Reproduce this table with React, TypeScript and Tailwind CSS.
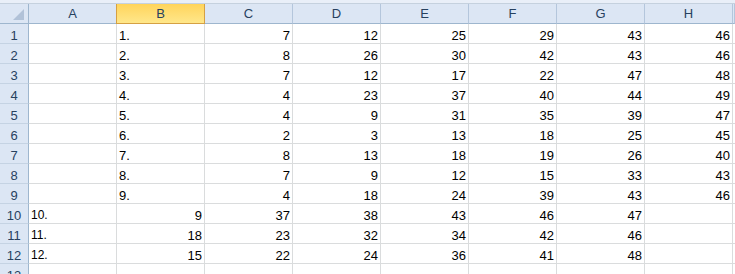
const COLS = ['A', 'B', 'C', 'D', 'E', 'F', 'G', 'H', ''];

// each row: [label column, label, numbers starting after label column]
const ROWS: { labelCol: number; label: string; nums: number[] }[] = [
  { labelCol: 1, label: '1.', nums: [7, 12, 25, 29, 43, 46] },
  { labelCol: 1, label: '2.', nums: [8, 26, 30, 42, 43, 46] },
  { labelCol: 1, label: '3.', nums: [7, 12, 17, 22, 47, 48] },
  { labelCol: 1, label: '4.', nums: [4, 23, 37, 40, 44, 49] },
  { labelCol: 1, label: '5.', nums: [4, 9, 31, 35, 39, 47] },
  { labelCol: 1, label: '6.', nums: [2, 3, 13, 18, 25, 45] },
  { labelCol: 1, label: '7.', nums: [8, 13, 18, 19, 26, 40] },
  { labelCol: 1, label: '8.', nums: [7, 9, 12, 15, 33, 43] },
  { labelCol: 1, label: '9.', nums: [4, 18, 24, 39, 43, 46] },
  { labelCol: 0, label: '10.', nums: [9, 37, 38, 43, 46, 47] },
  { labelCol: 0, label: '11.', nums: [18, 23, 32, 34, 42, 46] },
  { labelCol: 0, label: '12.', nums: [15, 22, 24, 36, 41, 48] },
];

const grid = 'grid grid-cols-[29px_repeat(8,88px)_1fr]';

function RowHeader({ n }: { n: number | string }) {
  return (
    <div className="h-[20px] bg-[#dce6f4] border-r border-b border-r-[#9eb6ce] border-b-[#c5d3e3] flex items-end justify-center pb-[1px] leading-[13px] text-[13px] text-[#27415f]">
      {n}
    </div>
  );
}

function Cell({ value, align, small }: { value?: string | number; align: 'left' | 'right'; small?: boolean }) {
  return (
    <div
      className={
        'h-[20px] border-r border-b border-[#dadcdd] flex items-end pb-[1px] px-[2px] leading-[13px] text-black whitespace-nowrap overflow-hidden ' +
        (align === 'right' ? 'justify-end ' : 'justify-start ') +
        (small ? 'text-[12px]' : 'text-[13px]')
      }
    >
      {value}
    </div>
  );
}

export default function App() {
  return (
    <div className="w-[735px] h-[274px] overflow-hidden bg-white font-['Liberation_Sans',Arial,sans-serif]">
      {/* strip above the column headers */}
      <div className="h-[4px] bg-[#e9eff8] border-b border-[#c5d1de]" />

      {/* column headers */}
      <div className={grid}>
        <div className="h-[20px] bg-[#dce6f4] border-r border-b border-[#9eb6ce] relative">
          <svg className="absolute left-[13px] top-[5px]" width="11" height="11" viewBox="0 0 11 11">
            <polygon points="11,0 11,11 0,11" fill="#b1c2d8" />
          </svg>
        </div>
        {COLS.map((c, i) =>
          c === 'B' ? (
            <div
              key={i}
              className="h-[20px] bg-gradient-to-b from-[#ffd45a] to-[#ffe78a] border-l border-r border-b border-[#d5a043] -ml-[1px] flex items-center justify-center text-[13px] text-[#27415f]"
            >
              {c}
            </div>
          ) : (
            <div
              key={i}
              className="h-[20px] bg-[#dce6f4] border-r border-b border-r-[#b4c6dc] border-b-[#9eb6ce] flex items-center justify-center text-[13px] text-[#27415f]"
            >
              {c}
            </div>
          )
        )}
      </div>

      {/* data rows */}
      {ROWS.map((r, ri) => (
        <div key={ri} className={grid}>
          <RowHeader n={ri + 1} />
          {COLS.map((_, ci) => {
            if (ci === r.labelCol) {
              return <Cell key={ci} value={r.label} align="left" small={r.labelCol === 0} />;
            }
            const k = ci - r.labelCol - 1;
            const v = k >= 0 && k < r.nums.length ? r.nums[k] : undefined;
            return <Cell key={ci} value={v} align="right" />;
          })}
        </div>
      ))}

      {/* next row, cut off at the bottom */}
      <div className={grid}>
        <RowHeader n={13} />
        {COLS.map((_, ci) => (
          <Cell key={ci} align="right" />
        ))}
      </div>
    </div>
  );
}
